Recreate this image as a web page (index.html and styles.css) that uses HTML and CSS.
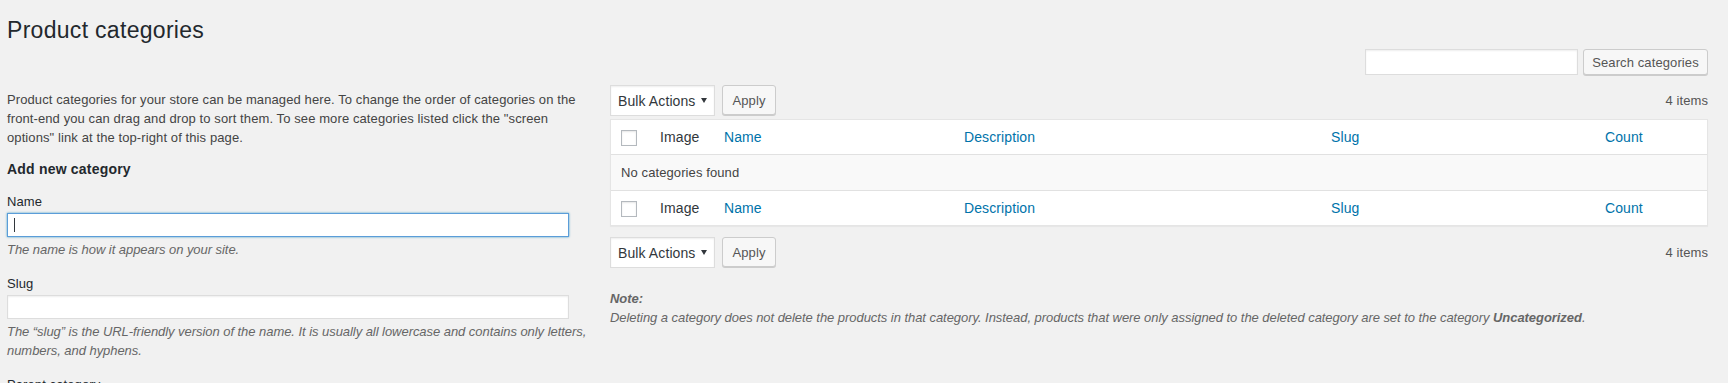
FILE: index.html
```html
<!DOCTYPE html>
<html>

<head>
  <title>Product categories</title>

  <link rel="stylesheet" href="styles.css">
</head>

<body>
  <div class="wrap">
    <h1>Product categories</h1>

    <!-- Search box -->
    <div class="search-box">
      <input type="search" class="search-input" />
      <button class="button search-btn">Search categories</button>
    </div>

    <div class="col-wrap">
      <!-- Add new category form -->
      <div class="col-left">
        <p class="intro">Product categories for your store can be managed here. To change the order of categories on the front-end you can drag and drop to sort them. To see more categories listed click the "screen options" link at the top-right of this page.</p>

        <h2>Add new category</h2>

        <div class="form-field">
          <label for="tag-name">Name</label>
          <div class="text-input is-focused" id="tag-name"><span class="caret"></span></div>
          <p class="description">The name is how it appears on your site.</p>
        </div>

        <div class="form-field">
          <label for="tag-slug">Slug</label>
          <input type="text" class="text-input" id="tag-slug" />
          <p class="description">The “slug” is the URL-friendly version of the name. It is usually all lowercase and contains only letters, numbers, and hyphens.</p>
        </div>

        <div class="form-field">
          <label for="parent">Parent category</label>
          <input type="text" class="text-input" id="parent" />
        </div>
      </div>

      <!-- Categories list -->
      <div class="col-right">
        <div class="tablenav">
          <div class="bulk-actions">
            <div class="bulk-select">
              <span>Bulk Actions</span>
              <svg class="arrow" width="6" height="5" viewBox="0 0 6 5"><path d="M0 0h6L3 5z" /></svg>
            </div>
            <button class="button apply-btn">Apply</button>
          </div>
          <span class="displaying-num">4 items</span>
        </div>

        <table class="list-table">
          <thead>
            <tr>
              <th class="check-column"><span class="checkbox"></span></th>
              <th class="column-thumb">Image</th>
              <th class="column-name"><a href="#">Name</a></th>
              <th class="column-description"><a href="#">Description</a></th>
              <th class="column-slug"><a href="#">Slug</a></th>
              <th class="column-count"><a href="#">Count</a></th>
            </tr>
          </thead>
          <tbody>
            <tr>
              <td colspan="6">No categories found</td>
            </tr>
          </tbody>
          <tfoot>
            <tr>
              <th class="check-column"><span class="checkbox"></span></th>
              <th>Image</th>
              <th><a href="#">Name</a></th>
              <th><a href="#">Description</a></th>
              <th><a href="#">Slug</a></th>
              <th><a href="#">Count</a></th>
            </tr>
          </tfoot>
        </table>

        <div class="tablenav tablenav-bottom">
          <div class="bulk-actions">
            <div class="bulk-select">
              <span>Bulk Actions</span>
              <svg class="arrow" width="6" height="5" viewBox="0 0 6 5"><path d="M0 0h6L3 5z" /></svg>
            </div>
            <button class="button apply-btn">Apply</button>
          </div>
          <span class="displaying-num">4 items</span>
        </div>

        <div class="form-note">
          <p><strong>Note:</strong></p>
          <p>Deleting a category does not delete the products in that category. Instead, products that were only assigned to the deleted category are set to the category <strong>Uncategorized</strong>.</p>
        </div>
      </div>
    </div>
  </div>
</body>

</html>
```

FILE: styles.css
```css
* {
  margin: 0;
  padding: 0;
  box-sizing: border-box;
}

:root {
  --heading: #23282d;
  --text: #444;
  --muted: #666;
  --link: #0073aa;
  --border: #ddd;
}

body {
  font-family: 'Liberation Sans', Arial, sans-serif;
  font-size: 13px;
  letter-spacing: 0.1px;
  color: var(--text);
  background-color: #f1f1f1;
  overflow: hidden;
}

.wrap {
  padding: 0 20px 0 7px;
}

h1 {
  margin-top: 15px;
  font-size: 23px;
  font-weight: 400;
  line-height: 30px;
  letter-spacing: 0.3px;
  color: var(--heading);
}

/* Search box */
.search-box {
  display: flex;
  justify-content: flex-end;
  gap: 5px;
  margin-top: 4px;
}

.search-input {
  width: 213px;
  height: 26px;
  border: 1px solid var(--border);
  background-color: #fff;
  box-shadow: inset 0 1px 2px rgba(0, 0, 0, 0.07);
  outline: none;
}

.button {
  font-family: inherit;
  font-size: 13px;
  letter-spacing: inherit;
  color: #555;
  background-color: #f7f7f7;
  border: 1px solid #ccc;
  border-radius: 3px;
  box-shadow: 0 1px 0 #ccc;
  cursor: pointer;
}

.search-btn {
  width: 125px;
  height: 26px;
}

/* Columns */
.col-wrap {
  display: grid;
  grid-template-columns: 592px 1fr;
  column-gap: 11px;
  margin-top: 10px;
}

.intro {
  margin-top: 5px;
  line-height: 19px;
}

h2 {
  margin-top: 12px;
  font-size: 14px;
  font-weight: 700;
  line-height: 20px;
  letter-spacing: 0.2px;
  color: var(--heading);
}

.form-field {
  margin-top: 15px;
}

h2 + .form-field {
  margin-top: 13px;
}

.form-field label {
  display: block;
  line-height: 19px;
  color: var(--heading);
}

.text-input {
  display: block;
  width: 95%;
  height: 24px;
  margin-top: 2px;
  border: 1px solid var(--border);
  background-color: #fff;
  box-shadow: inset 0 1px 2px rgba(0, 0, 0, 0.07);
  outline: none;
}

.text-input.is-focused {
  border-color: #5b9dd9;
  box-shadow: 0 0 2px rgba(30, 140, 190, 0.8);
}

.caret {
  display: block;
  width: 1px;
  height: 14px;
  margin: 4px 0 0 6px;
  background-color: #32373c;
}

.description {
  margin-top: 3px;
  line-height: 19px;
  font-style: italic;
  letter-spacing: -0.05px;
  color: var(--muted);
}

/* Table nav */
.tablenav {
  display: flex;
  align-items: center;
  justify-content: space-between;
  height: 31px;
}

.tablenav-bottom {
  margin-top: 11px;
}

.bulk-actions {
  display: flex;
  align-items: flex-start;
  gap: 7px;
  height: 31px;
}

.bulk-select {
  display: flex;
  align-items: center;
  justify-content: space-between;
  width: 105px;
  height: 31px;
  padding: 0 7px;
  font-size: 14px;
  color: #32373c;
  background-color: #fff;
  border: 1px solid var(--border);
  box-shadow: inset 0 1px 2px rgba(0, 0, 0, 0.07);
}

.arrow {
  fill: #32373c;
}

.apply-btn {
  width: 54px;
  height: 30px;
}

.displaying-num {
  color: #555;
}

/* List table */
.list-table {
  width: 100%;
  margin-top: 3px;
  table-layout: fixed;
  border-spacing: 0;
  border: 1px solid #e5e5e5;
  background-color: #fff;
  box-shadow: 0 1px 1px rgba(0, 0, 0, 0.04);
}

.list-table th {
  padding: 8px 10px;
  font-size: 14px;
  font-weight: 400;
  line-height: 18px;
  text-align: left;
  color: #32373c;
}

.list-table thead th {
  border-bottom: 1px solid #e1e1e1;
}

.list-table tfoot th {
  border-top: 1px solid #e1e1e1;
}

.list-table td {
  padding: 8px 10px;
  line-height: 19px;
  background-color: #f9f9f9;
}

.list-table a {
  color: var(--link);
  text-decoration: none;
}

.list-table .check-column {
  width: 39px;
  padding: 10px 0 8px 10px;
}

.column-thumb {
  width: 64px;
}

.column-name {
  width: 240px;
}

.column-description {
  width: 367px;
}

.column-slug {
  width: 274px;
}

.checkbox {
  display: block;
  width: 16px;
  height: 16px;
  border: 1px solid #b4b9be;
  background-color: #fff;
  box-shadow: inset 0 1px 2px rgba(0, 0, 0, 0.1);
}

/* Note */
.form-note {
  margin-top: 21px;
  line-height: 19px;
  font-style: italic;
  letter-spacing: -0.05px;
  color: var(--muted);
}
```
